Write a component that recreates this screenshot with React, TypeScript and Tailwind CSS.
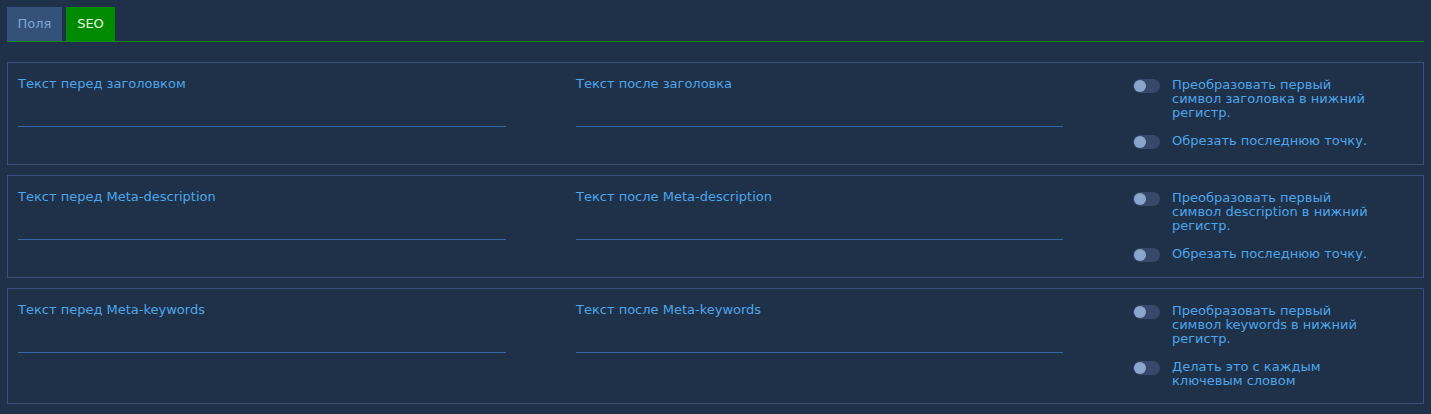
import React from "react";

type ToggleItem = { lines: string[] };

type Section = {
  before: string;
  after: string;
  toggles: ToggleItem[];
};

const sections: Section[] = [
  {
    before: "Текст перед заголовком",
    after: "Текст после заголовка",
    toggles: [
      { lines: ["Преобразовать первый", "символ заголовка в нижний", "регистр."] },
      { lines: ["Обрезать последнюю точку."] },
    ],
  },
  {
    before: "Текст перед Meta-description",
    after: "Текст после Meta-description",
    toggles: [
      { lines: ["Преобразовать первый", "символ description в нижний", "регистр."] },
      { lines: ["Обрезать последнюю точку."] },
    ],
  },
  {
    before: "Текст перед Meta-keywords",
    after: "Текст после Meta-keywords",
    toggles: [
      { lines: ["Преобразовать первый", "символ keywords в нижний", "регистр."] },
      { lines: ["Делать это с каждым", "ключевым словом"] },
    ],
  },
];

function Field({ label }: { label: string }) {
  return (
    <label className="block pt-[3px]">
      <span className="block text-[13px] leading-[16px] text-[#4ea6ea]">{label}</span>
      <input
        className="block h-[35px] w-full border-b border-[#3567a6] bg-transparent text-[13px] text-[#cfe2f7] outline-none"
        type="text"
      />
    </label>
  );
}

function Toggle({ lines }: ToggleItem) {
  return (
    <div className="flex items-start gap-[12px]">
      <span className="mt-[1px] flex h-[14px] w-[27px] shrink-0 items-center rounded-full bg-[#37496a] px-[1px]">
        <span className="h-[12px] w-[12px] rounded-full bg-[#8ba5cd]" />
      </span>
      <span className="text-[13px] leading-[14px] text-[#4ea6ea]">
        {lines.map((line, i) => (
          <span className="block" key={i}>
            {line}
          </span>
        ))}
      </span>
    </div>
  );
}

export default function App() {
  return (
    <div
      className="min-h-screen bg-[#1e3149] px-[7px] pt-[7px] pb-[9px]"
      style={{ fontFamily: '"DejaVu Sans", "Open Sans", sans-serif' }}
    >
      <div className="flex gap-[4px] border-b border-[#128a12]">
        <button className="h-[34px] w-[55px] bg-[#34517a] text-[13px] text-[#7fa4d2]" type="button">
          Поля
        </button>
        <button className="h-[34px] w-[49px] bg-[#008a00] text-[13px] text-[#eef5e6]" type="button">
          SEO
        </button>
      </div>

      <div className="mt-[20px] flex flex-col gap-[10px]">
        {sections.map((section) => (
          <div className="border border-[#3a527b] px-[10px] pt-[10px] pb-[15px]" key={section.before}>
            <div className="grid grid-cols-[488px_487px_1fr] gap-x-[70px]">
              <Field label={section.before} />
              <Field label={section.after} />
              <div className="flex flex-col gap-[14px] pt-[5px]">
                {section.toggles.map((t, i) => (
                  <Toggle key={i} lines={t.lines} />
                ))}
              </div>
            </div>
          </div>
        ))}
      </div>
    </div>
  );
}
